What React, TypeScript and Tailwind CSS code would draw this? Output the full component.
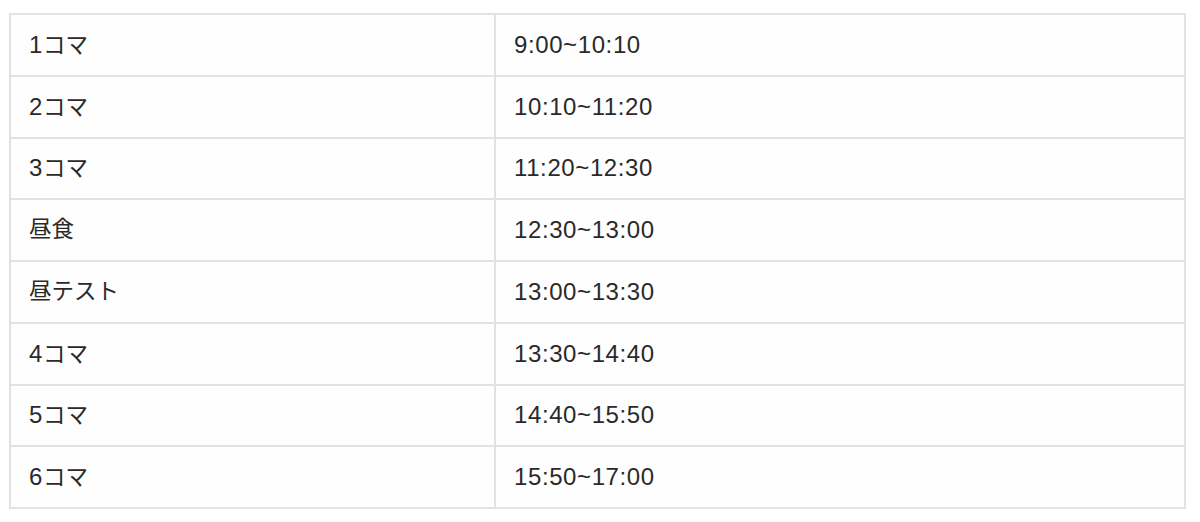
const rows: [string, string][] = [
  ["1コマ", "9:00~10:10"],
  ["2コマ", "10:10~11:20"],
  ["3コマ", "11:20~12:30"],
  ["昼食", "12:30~13:00"],
  ["昼テスト", "13:00~13:30"],
  ["4コマ", "13:30~14:40"],
  ["5コマ", "14:40~15:50"],
  ["6コマ", "15:50~17:00"],
];

function Label({ text }: { text: string }) {
  // 数字部分はやや大きく表示
  const m = text.match(/^(\d*)(.*)$/);
  const num = m ? m[1] : "";
  const rest = m ? m[2] : text;
  return (
    <>
      {num && <span className="text-[24px] tracking-[0.6px]">{num}</span>}
      <span className="text-[22.5px]">{rest}</span>
    </>
  );
}

export default function App() {
  return (
    <div
      className="min-h-screen bg-white pt-[13px] pl-[9px] pr-[14px]"
      style={{ fontFamily: '"Liberation Sans", "Noto Sans CJK JP", sans-serif' }}
    >
      <table className="w-[1177px] border-collapse border-2 border-[#e2e2e2] bg-[#fefefe] text-[#2a2a2a]">
        <tbody>
          {rows.map(([label, time]) => (
            <tr key={label} className="h-[61.75px]">
              <td className="w-[485px] border-2 border-[#e2e2e2] pl-[18px] align-middle">
                <Label text={label} />
              </td>
              <td className="border-2 border-[#e2e2e2] pl-[18px] align-middle text-[24px] tracking-[0.6px]">{time}</td>
            </tr>
          ))}
        </tbody>
      </table>
    </div>
  );
}
